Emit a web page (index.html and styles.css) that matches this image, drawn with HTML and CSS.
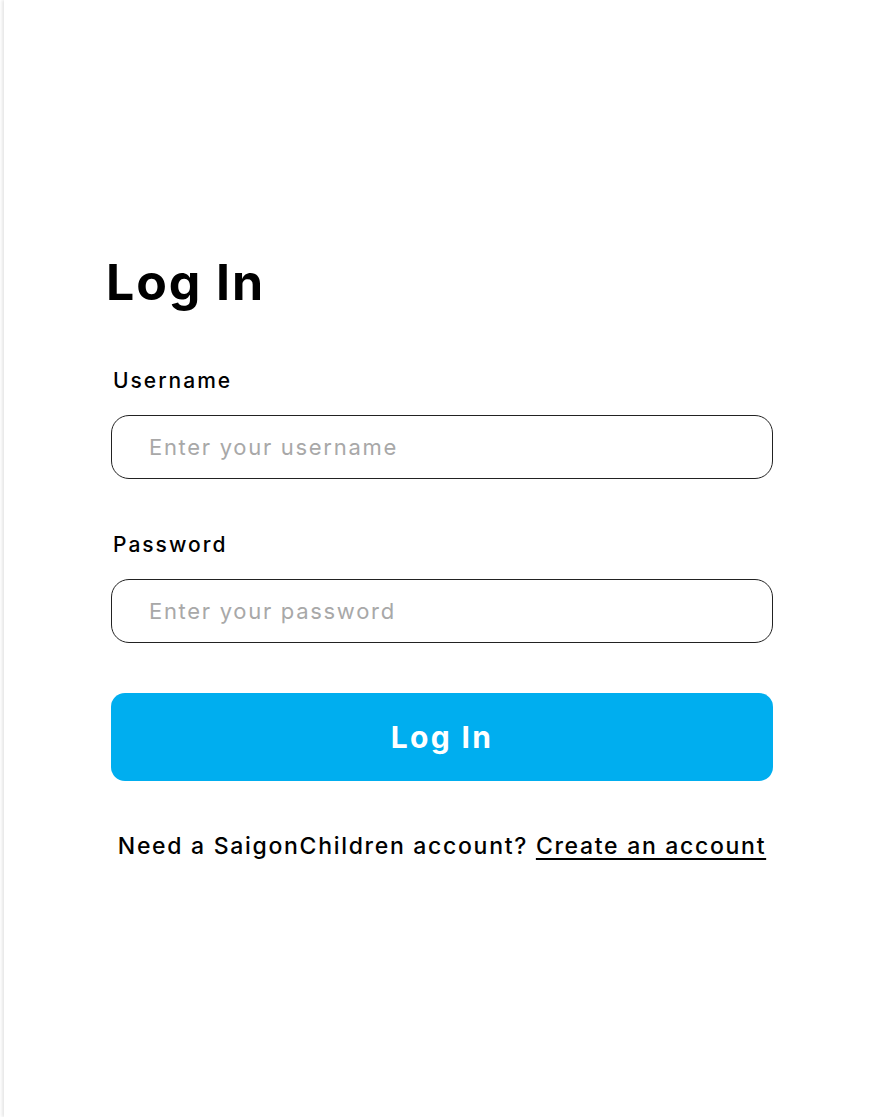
FILE: index.html
```html
<!DOCTYPE html>
<html lang="en">
<head>
<meta charset="utf-8">
<title>Log In</title>
<link rel="stylesheet" href="styles.css">
</head>
<body>
<main class="panel">
  <section class="login">
    <h1 class="login-title">Log In</h1>
    <form class="login-form">
      <div class="field">
        <label class="field-label" for="username">Username</label>
        <input class="field-input" id="username" type="text" placeholder="Enter your username">
      </div>
      <div class="field">
        <label class="field-label" for="password">Password</label>
        <input class="field-input" id="password" type="password" placeholder="Enter your password">
      </div>
      <button class="login-button" type="button">Log In</button>
      <p class="signup">Need a SaigonChildren account? <a class="signup-link" href="#">Create an account</a></p>
    </form>
  </section>
</main>
</body>
</html>
```

FILE: styles.css
```css
* { box-sizing: border-box; }
html, body { margin: 0; padding: 0; background: #fff; }
body {
  font-family: Inter, "Noto Sans", "Liberation Sans", sans-serif;
  color: #000;
}
.panel {
  margin-left: 4px;
  min-height: 1117px;
  background: #fff;
  box-shadow: -2px 0 3px rgba(0, 0, 0, 0.10);
  padding: 252px 0 0 107px;
}
.login { width: 662px; }
.login-title {
  margin: 0 0 0 -5px;
  font-size: 50px;
  line-height: 60px;
  font-weight: 700;
  letter-spacing: 1.9px;
}
.login-form {
  display: flex;
  flex-direction: column;
  margin-top: 55px;
}
.field { display: flex; flex-direction: column; }
.field + .field { margin-top: 52px; }
.field-label {
  font-size: 21px;
  line-height: 28px;
  font-weight: 500;
  letter-spacing: 2px;
  margin-bottom: 20px;
  padding-left: 2px;
}
.field-input {
  width: 662px;
  height: 64px;
  border: 1px solid #222;
  border-radius: 18px;
  padding: 0 0 0 37px;
  font-family: inherit;
  font-size: 22px;
  letter-spacing: 1.7px;
  color: #000;
  background: #fff;
  outline: none;
}
.field-input::placeholder { color: #a8a8a8; }
.login-button {
  margin-top: 50px;
  width: 662px;
  height: 88px;
  border: none;
  border-radius: 14px;
  background: #00aeef;
  color: #fff;
  font-family: inherit;
  font-size: 30px;
  font-weight: 700;
  letter-spacing: 2.3px;
}
.signup {
  margin: 50px 0 0;
  text-align: center;
  font-size: 23px;
  line-height: 30px;
  font-weight: 500;
  letter-spacing: 1.7px;
}
.signup-link { color: #000; text-decoration: underline; text-underline-offset: 4px; }
```
